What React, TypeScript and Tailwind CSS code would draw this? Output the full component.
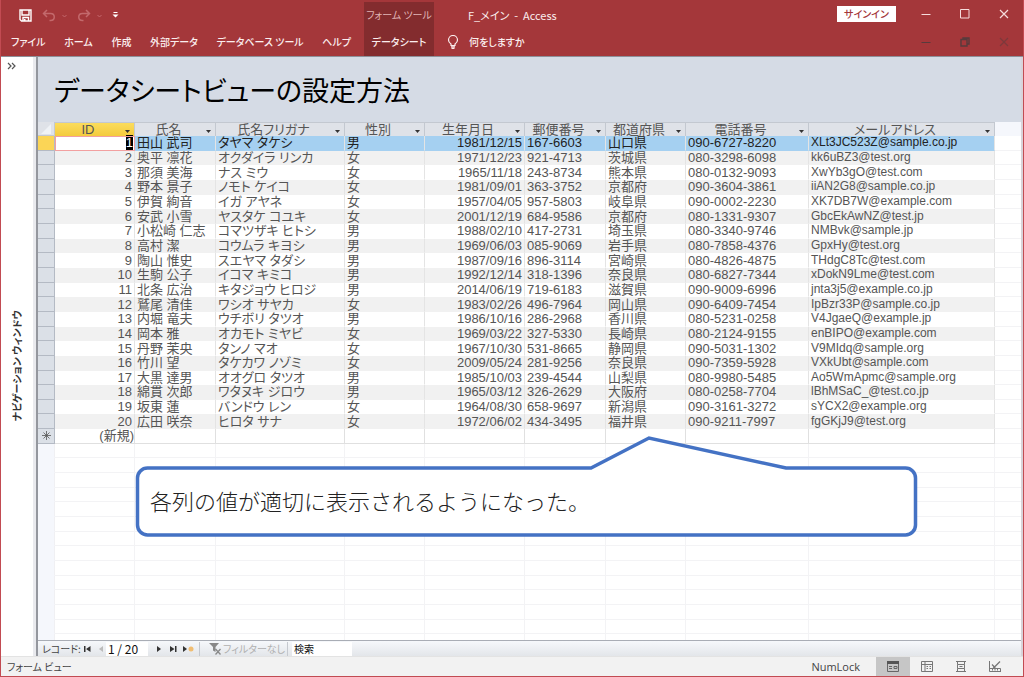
import React, { useState } from "react";

type Member = {
  id: number;
  name: string;
  kana: string;
  gender: string;
  birthday: string;
  zip: string;
  pref: string;
  tel: string;
  mail: string;
};

const rows: [string, string, string, string, string, string, string, string][] = [
  ["田山 武司", "タヤマ タケシ", "男", "1981/12/15", "167-6603", "山口県", "090-6727-8220", "XLt3JC523Z@sample.co.jp"],
  ["奥平 凛花", "オクダイラ リンカ", "女", "1971/12/23", "921-4713", "茨城県", "080-3298-6098", "kk6uBZ3@test.org"],
  ["那須 美海", "ナス ミウ", "女", "1965/11/18", "243-8734", "熊本県", "080-0132-9093", "XwYb3gO@test.com"],
  ["野本 景子", "ノモト ケイコ", "女", "1981/09/01", "363-3752", "京都府", "090-3604-3861", "iiAN2G8@sample.co.jp"],
  ["伊賀 絢音", "イガ アヤネ", "女", "1957/04/05", "957-5803", "岐阜県", "090-0002-2230", "XK7DB7W@example.com"],
  ["安武 小雪", "ヤスタケ コユキ", "女", "2001/12/19", "684-9586", "京都府", "080-1331-9307", "GbcEkAwNZ@test.jp"],
  ["小松崎 仁志", "コマツザキ ヒトシ", "男", "1988/02/10", "417-2731", "埼玉県", "080-3340-9746", "NMBvk@sample.jp"],
  ["高村 潔", "コウムラ キヨシ", "男", "1969/06/03", "085-9069", "岩手県", "080-7858-4376", "GpxHy@test.org"],
  ["陶山 惟史", "スエヤマ タダシ", "男", "1987/09/16", "896-3114", "宮崎県", "080-4826-4875", "THdgC8Tc@test.com"],
  ["生駒 公子", "イコマ キミコ", "男", "1992/12/14", "318-1396", "奈良県", "080-6827-7344", "xDokN9Lme@test.com"],
  ["北条 広治", "キタジョウ ヒロジ", "男", "2014/06/19", "719-6183", "滋賀県", "090-9009-6996", "jnta3j5@example.co.jp"],
  ["鷲尾 清佳", "ワシオ サヤカ", "女", "1983/02/26", "496-7964", "岡山県", "090-6409-7454", "IpBzr33P@sample.co.jp"],
  ["内堀 竜夫", "ウチボリ タツオ", "男", "1986/10/16", "286-2968", "香川県", "080-5231-0258", "V4JgaeQ@example.jp"],
  ["岡本 雅", "オカモト ミヤビ", "女", "1969/03/22", "327-5330", "長崎県", "080-2124-9155", "enBIPO@example.com"],
  ["丹野 茉央", "タンノ マオ", "女", "1967/10/30", "531-8665", "静岡県", "090-5031-1302", "V9MIdq@sample.org"],
  ["竹川 望", "タケカワ ノゾミ", "女", "2009/05/24", "281-9256", "奈良県", "090-7359-5928", "VXkUbt@sample.com"],
  ["大黒 達男", "オオグロ タツオ", "男", "1985/10/03", "239-4544", "山梨県", "080-9980-5485", "Ao5WmApmc@sample.org"],
  ["綿貫 次郎", "ワタヌキ ジロウ", "男", "1965/03/12", "326-2629", "大阪府", "080-0258-7704", "lBhMSaC_@test.co.jp"],
  ["坂東 蓮", "バンドウ レン", "女", "1964/08/30", "658-9697", "新潟県", "090-3161-3272", "sYCX2@example.org"],
  ["広田 咲奈", "ヒロタ サナ", "女", "1972/06/02", "434-3495", "福井県", "090-9211-7997", "fgGKjJ9@test.org"],
];

const members: Member[] = rows.map(([name, kana, gender, birthday, zip, pref, tel, mail], i) => ({
  id: i + 1, name, kana, gender, birthday, zip, pref, tel, mail,
}));

const columns: { key: keyof Member; label: string; width: string; cell: string }[] = [
  { key: "id", label: "ID", width: "w-[80px]", cell: "pr-[2px] text-right" },
  { key: "name", label: "氏名", width: "w-[81px]", cell: "pl-[2px]" },
  { key: "kana", label: "氏名フリガナ", width: "w-[129px]", cell: "pl-[2px]" },
  { key: "gender", label: "性別", width: "w-[80px]", cell: "pl-[2px]" },
  { key: "birthday", label: "生年月日", width: "w-[100px]", cell: "pr-[2px] text-right" },
  { key: "zip", label: "郵便番号", width: "w-[81px]", cell: "pl-[2px]" },
  { key: "pref", label: "都道府県", width: "w-[80px]", cell: "pl-[2px]" },
  { key: "tel", label: "電話番号", width: "w-[123px]", cell: "pl-[2px]" },
  { key: "mail", label: "メールアドレス", width: "w-[186px]", cell: "pl-[2px] text-[12px] leading-[13px]" },
];

const emptyRows = Array.from({ length: 14 }, (_, i) => i);
const menuTabs = ["ファイル", "ホーム", "作成", "外部データ", "データベース ツール", "ヘルプ"];

const WindowButtons: React.FC<{ child?: boolean }> = ({ child }) => (
  <div className={child ? "flex h-7 text-[#573b3d]" : "flex h-7 text-[#f6dcdc]"}>
    <button aria-label="最小化" className="flex w-[39px] items-center justify-center">
      <svg width="12" height="12" viewBox="0 0 12 12" fill="none" stroke="currentColor">
        <path d="M1.500 6.500H10.500" />
      </svg>
    </button>
    <button aria-label={child ? "元に戻す" : "最大化"} className="flex w-[39px] items-center justify-center">
      <svg width="12" height="12" viewBox="0 0 12 12" fill="none" stroke="currentColor">
        {child ? (
          <path d="M2 3.500h6v6.500h-6zM4 3.500v-1.500h6v6h-2" strokeWidth="1.400" />
        ) : (
          <path d="M1.500 1.500h8.500v8.500h-8.500z" />
        )}
      </svg>
    </button>
    <button aria-label="閉じる" className={child ? "flex w-[39px] items-center justify-center opacity-50" : "flex w-[39px] items-center justify-center"}>
      <svg width="12" height="12" viewBox="0 0 12 12" fill="none" stroke="currentColor" strokeWidth="1.200">
        <path d="M2 2l8 8M10 2l-8 8" />
      </svg>
    </button>
  </div>
);

const Header: React.FC = () => (
  <header className="flex h-14 shrink-0 bg-[#a4373a] text-[10px] leading-4 text-[#fbeeee]">
    <div className="flex w-[363px] shrink-0 flex-col">
      {/* Quick access toolbar */}
      <div className="flex h-7 items-end gap-[10px] pb-[6px] pl-[18px]">
        <button aria-label="上書き保存">
          <svg width="13" height="13" viewBox="0 0 13 13" fill="none" stroke="#fff">
            <path d="M1 1h11v11H2.500L1 10.500zM3 1.500v4.500h7V1.500M4 12V8.500h5.500V12" strokeWidth="1.400" />
            <path d="M5 10h1.500v2H5z" fill="#fff" stroke="none" />
          </svg>
        </button>
        <div className="flex items-center gap-[6px] text-[#c3696c]">
          <button aria-label="元に戻す">
            <svg width="14" height="13" viewBox="0 0 14 13" fill="none" stroke="currentColor" strokeWidth="1.500">
              <path d="M5 1L1.500 4.500 5 8M1.500 4.500h7c5 0 5 7 0 7h-1" />
            </svg>
          </button>
          <svg width="5" height="4" viewBox="0 0 5 4" fill="none" stroke="currentColor"><path d="M.5 1l2 2 2-2" /></svg>
        </div>
        <div className="flex items-center gap-[6px] text-[#c3696c]">
          <button aria-label="やり直し">
            <svg width="14" height="13" viewBox="0 0 14 13" fill="none" stroke="currentColor" strokeWidth="1.500">
              <path d="M9 1l3.500 3.500L9 8M12.500 4.500h-7c-5 0-5 7 0 7h1" />
            </svg>
          </button>
          <svg width="5" height="4" viewBox="0 0 5 4" fill="none" stroke="currentColor"><path d="M.5 1l2 2 2-2" /></svg>
        </div>
        <button aria-label="クイック アクセス ツール バーのカスタマイズ" className="pb-1">
          <svg width="7" height="6" viewBox="0 0 7 6" fill="#fff"><path d="M1.500 0h4v1h-4zM.5 2.500h6L3.500 5.500z" /></svg>
        </button>
      </div>
      <nav className="flex h-7 items-center justify-between pl-[10px] pr-[13px] font-medium">
        {menuTabs.map((tab) => (
          <button key={tab} className="whitespace-nowrap">{tab}</button>
        ))}
      </nav>
    </div>

    {/* Contextual tab */}
    <div className="mt-[2px] flex w-[70px] shrink-0 flex-col items-center bg-[#832c2e]">
      <span className="flex h-[26px] items-center whitespace-nowrap text-[#e0b4b5]">フォーム ツール</span>
      <button className="h-7 whitespace-nowrap font-medium">データシート</button>
    </div>

    <div className="flex flex-1 flex-col">
      <div className="flex h-7 items-center pl-[34px]">
        <span className="whitespace-pre pt-[2px] text-[11px]">F_メイン  -  Access</span>
        <button className="ml-auto mr-[10px] h-4 w-[59px] bg-white font-medium text-[#a4373a]">サインイン</button>
        <WindowButtons />
      </div>
      <div className="flex h-7 items-center justify-between pl-[13px]">
        <button className="flex items-center gap-[10px] font-medium">
          <svg width="12" height="14" viewBox="0 0 12 14" fill="none" stroke="currentColor">
            <path d="M4 10.500V9C2.500 8 1.500 6.800 1.500 5a4.500 4.500 0 019 0c0 1.800-1 3-2.500 4v1.500zM4 11.800h4M4.500 13.300h3" strokeWidth="1.200" />
          </svg>
          何をしますか
        </button>
        <WindowButtons child />
      </div>
    </div>
  </header>
);

const Datasheet: React.FC = () => (
  <div className="min-h-0 flex-1 overflow-hidden bg-white">
    <table className="h-[527px] w-full table-fixed border-separate border-spacing-0 font-['Liberation_Sans','Noto_Sans_CJK_JP',sans-serif] text-[13px] font-normal leading-[13px] text-[#555]">
      <colgroup>
        <col className="w-[17px]" />
        {columns.map((c) => (
          <col key={c.key} className={c.width} />
        ))}
        <col />
      </colgroup>
      <thead>
        <tr className="bg-[#dfe2e8]">
          <th aria-label="すべて選択" className="border-b border-r border-[#c3c8d0] p-0">
            <svg width="14" height="12" viewBox="0 0 14 12" className="ml-px"><path d="M12 1v10H2z" fill="#eff2f6" /></svg>
          </th>
          {columns.map((c) => (
            <th
              key={c.key}
              className={`border-r border-t border-[#c3c8d0] p-0 font-normal ${c.key === "id" ? "bg-gradient-to-b from-[#fbdc5c] to-[#f4cb3c]" : ""}`}
            >
              <div className="flex items-center">
                <span className="flex-1 whitespace-nowrap text-center">{c.label}</span>
                <button aria-label={`${c.label} の並べ替え`} className="flex w-[13px] justify-center pt-1">
                  <svg width="5" height="3" viewBox="0 0 5 3" fill="#333"><path d="M0 0h5L2.500 3z" /></svg>
                </button>
              </div>
            </th>
          ))}
          <th aria-label="空の列" className="bg-[#f5f7fc] p-0" />
        </tr>
      </thead>
      <tbody>
        {members.map((m, i) => (
          <tr key={m.id} className={i === 0 ? "bg-[#a5d0f1] text-[#222]" : i % 2 ? "bg-[#f1f1f1]" : "bg-white"}>
            <td className={`border-b border-r border-[#b4bac4] p-0 ${i === 0 ? "bg-[#fbd556]" : "bg-[#dbe0e7]"}`} />
            {columns.map((c) => (
              <td
                key={c.key}
                className={`whitespace-nowrap border-b border-b-transparent py-0 ${c.cell} ${
                  i === 0 && c.key === "id" ? "bg-white outline outline-[#f2a0a0] -outline-offset-1" : "border-r border-r-[#e4e4e4]"
                }`}
              >
                {i === 0 && c.key === "id" ? <span className="bg-black text-white">{m[c.key]}</span> : m[c.key]}
              </td>
            ))}
            <td className="border-b border-[#f3f3f5] bg-white p-0" />
          </tr>
        ))}
        <tr>
          <td className="border-b border-r border-[#b4bac4] bg-[#dbe0e7] p-0 text-center">
            <svg width="9" height="9" viewBox="0 0 9 9" stroke="#555" className="mx-auto">
              <path d="M4.500 0v9M0 4.500h9M1.500 1.500l6 6M7.500 1.500l-6 6" strokeWidth=".8" />
            </svg>
          </td>
          {columns.map((c) => (
            <td key={c.key} className="whitespace-nowrap border-b border-r border-[#e0e0e0] p-0 text-right">
              {c.key === "id" ? "(新規)" : ""}
            </td>
          ))}
          <td className="border-b border-[#f3f3f5] p-0" />
        </tr>
        {emptyRows.map((n) => (
          <tr key={n}>
            <td className="border-b border-r border-b-[#f5f7fc] border-r-[#f0f0f3] bg-[#f5f7fc] p-0">&nbsp;</td>
            {columns.map((c) => (
              <td key={c.key} className="border-b border-r border-[#f3f3f5] p-0" />
            ))}
            <td className="border-b border-[#f3f3f5] p-0" />
          </tr>
        ))}
      </tbody>
    </table>
  </div>
);

const RecordNav: React.FC = () => {
  const [record, setRecord] = useState("1 / 20");
  const [keyword, setKeyword] = useState("検索");

  return (
    <div className="flex h-4 shrink-0 items-center border-t border-[#a9adb5] bg-gradient-to-b from-[#f6f8fb] to-[#e3e6ea] pl-1 text-[10px] leading-[14px] text-[#444]">
      <label htmlFor="record" className="w-[37px] whitespace-nowrap">レコード:</label>
      <button aria-label="先頭のレコード" className="flex w-4 justify-center">
        <svg width="7" height="6" viewBox="0 0 7 6" fill="#333"><path d="M0 0h1.500v6H0zM6.500 0v6L2 3z" /></svg>
      </button>
      <button aria-label="前のレコード" className="flex w-[11px] justify-center">
        <svg width="4" height="6" viewBox="0 0 4 6" fill="#bbb"><path d="M4 0v6L0 3z" /></svg>
      </button>
      <input
        id="record"
        value={record}
        onChange={(e) => setRecord(e.target.value)}
        className="h-[14px] w-[42px] bg-white pl-[2px] text-[12px] text-[#111] outline-none"
      />
      <button aria-label="次のレコード" className="ml-[3px] flex w-4 justify-center">
        <svg width="4" height="6" viewBox="0 0 4 6" fill="#333"><path d="M0 0v6l4-3z" /></svg>
      </button>
      <button aria-label="最終レコード" className="flex w-[13px] justify-center">
        <svg width="7" height="6" viewBox="0 0 7 6" fill="#333"><path d="M5 0h1.500v6H5zM0 0v6l4.500-3z" /></svg>
      </button>
      <button aria-label="新しい (空の) レコード" className="flex w-4 justify-center">
        <svg width="11" height="6" viewBox="0 0 11 6"><path d="M0 0v6l4-3z" fill="#333" /><circle cx="8" cy="3" r="2.500" fill="#f0bd72" /></svg>
      </button>
      <button className="ml-[3px] flex w-[89px] items-center gap-px whitespace-nowrap border-x border-[#c5c9cf] pl-[9px] text-[#b0b0b0]">
        <svg width="13" height="12" viewBox="0 0 13 12" fill="#888">
          <path d="M0 0h10L6.500 4v5L4 7.500V4z" />
          <path d="M6.500 6l5 5.500M11.500 6l-5 5.500" stroke="#888" strokeWidth="1.300" />
        </svg>
        フィルターなし
      </button>
      <input
        aria-label="検索"
        value={keyword}
        onChange={(e) => setKeyword(e.target.value)}
        className="ml-1 h-[14px] w-[60px] bg-white pl-[2px] text-[#111] outline-none"
      />
    </div>
  );
};

const StatusBar: React.FC = () => (
  <footer className="flex h-5 shrink-0 items-center border-t border-[#e3e3e3] bg-[#f2f2f2] pl-[6px] pr-[11px] text-[10px] leading-4 text-[#444]">
    <span>フォーム ビュー</span>
    <span className="ml-auto mr-4 font-['Open_Sans','Noto_Sans',sans-serif] text-[11px]">NumLock</span>
    <button aria-label="フォーム ビュー" className="flex h-full w-[34px] items-center justify-center bg-[#c6c6c6]">
      <svg width="12" height="11" viewBox="0 0 12 11" fill="none" stroke="#666">
        <path d="M.5.5h11v10H.5zM2 5.500h3M2 7.500h3M7 5.500h3v2H7z" /><path d="M0 0h12v3H0z" fill="#555" stroke="none" />
      </svg>
    </button>
    <button aria-label="データシート ビュー" className="flex h-full w-[34px] items-center justify-center">
      <svg width="12" height="11" viewBox="0 0 12 11" fill="none" stroke="#777">
        <path d="M.5.5h11v10H.5zM.5 3.500h11M4 .5v10" /><path d="M5.500 5.500h1.500M8.500 5.500H10M5.500 7.500h1.500M8.500 7.500H10" />
      </svg>
    </button>
    <button aria-label="レイアウト ビュー" className="flex h-full w-[34px] items-center justify-center">
      <svg width="12" height="11" viewBox="0 0 12 11" fill="none" stroke="#777">
        <path d="M1 .5h10M1 10.500h10M2.500 3.500h7M2.500 7.500h7M2.500.5v3M9.500.5v3M2.500 7.500v3M9.500 7.500v3M2.500 3.500v4M9.500 3.500v4M4.500 5.500h3" />
      </svg>
    </button>
    <button aria-label="デザイン ビュー" className="flex h-full w-[34px] items-center justify-center">
      <svg width="12" height="11" viewBox="0 0 12 11" fill="none" stroke="#777">
        <path d="M.5 0v10.500H12M.5 7.500h11v3M3.500 8v1.500M6 8v1.500M8.500 8v1.500" /><path d="M11 .5L5.500 6 3 3.500M4 6l2.500.5" strokeWidth="1.300" />
      </svg>
    </button>
  </footer>
);

const Callout: React.FC = () => (
  <div className="absolute left-[133px] top-[434px] h-[104px] w-[785px]">
    <svg className="absolute inset-0" width="785" height="104" viewBox="0 0 785 104">
      <path
        d="M13.500 34H457L515 4l137 30H771.500a10 10 0 0110 10V91a10 10 0 01-10 10H13.500a10 10 0 01-10-10V44a10 10 0 0110-10z"
        fill="#fff"
        stroke="#4472c4"
        strokeWidth="3.500"
      />
    </svg>
    <p className="relative whitespace-nowrap pl-4 pt-[50px] text-[22px] font-light leading-[32px] text-[#222] [font-feature-settings:normal]">
      各列の値が適切に表示されるようになった。
    </p>
  </div>
);

export default function App() {
  return (
    <div className="relative flex h-screen flex-col overflow-hidden border-x border-b border-[#c24b52] bg-white font-['Noto_Sans_CJK_JP',sans-serif] [font-feature-settings:'palt']">
      <Header />
      <div className="flex min-h-0 flex-1 border-t border-[#8d9099]">
        {/* Collapsed navigation pane */}
        <aside className="relative flex w-[35px] shrink-0 items-center justify-center border-r-[3px] border-[#e9eaee] bg-white">
          <button aria-label="ナビゲーション ウィンドウを開く" className="absolute left-[6px] top-[5px]">
            <svg width="9" height="8" viewBox="0 0 9 8" fill="none" stroke="#555" strokeWidth="1.200">
              <path d="M1 1l3 3-3 3M5 1l3 3-3 3" />
            </svg>
          </button>
          <span className="rotate-180 whitespace-nowrap pb-[18px] text-[10px] font-bold leading-4 text-[#333] [text-orientation:sideways] [writing-mode:vertical-rl]">
            ナビゲーション ウィンドウ
          </span>
        </aside>
        <main className="flex min-w-0 flex-1 flex-col border-l-2 border-r-2 border-l-[#94979e] border-r-[#d9d3da]">
          <h1 className="flex h-[65px] shrink-0 items-center bg-[#d5dbe5] pl-4 text-[27px] leading-[36px] text-black">
            データシートビューの設定方法
          </h1>
          <Datasheet />
          <RecordNav />
        </main>
      </div>
      <StatusBar />
      <Callout />
    </div>
  );
}
